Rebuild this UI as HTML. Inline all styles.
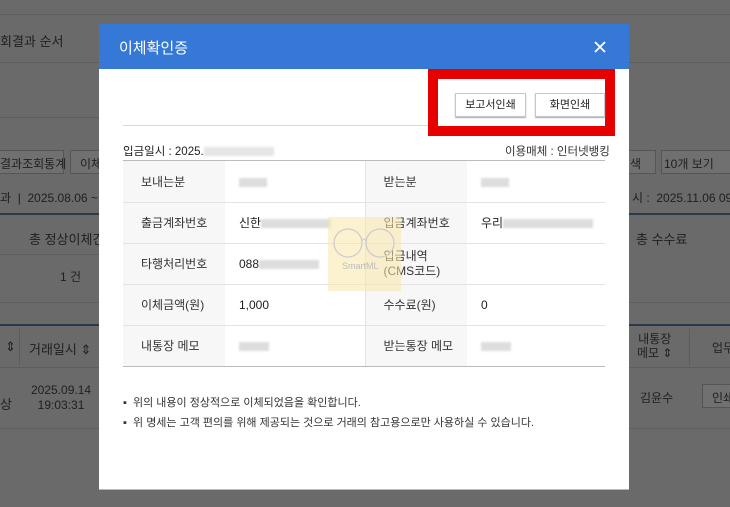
<!DOCTYPE html>
<html><head><meta charset="utf-8"><style>
*{margin:0;padding:0;box-sizing:border-box}
body{width:730px;height:507px;overflow:hidden;background:#6a6a6a;position:relative;font-family:"Liberation Sans","Noto Sans CJK KR",sans-serif;color:#1e1e1e}
.a{position:absolute}
.bg{font-size:12px;color:#1f1f1f;white-space:nowrap}
.hl{height:1px;background:#5e5e5e}
.dl{height:2px;background:#2a3a4a}
.btnb{border:1px solid #555;background:#707070}
#m{left:99px;top:24px;width:530px;height:466px;background:#fff;border-bottom:1px solid #bbb}
#hd{left:0;top:0;width:530px;height:45px;background:#3578d6;color:#fff;font-size:15px;padding:13px 0 0 20px}
table{border-collapse:collapse;font-size:12px}
td{height:41px;border-bottom:1px solid #e3e3e3;vertical-align:middle}
td.l{background:#f7f7f7;width:102px;padding-left:18px;color:#333}
td.v{width:140px;padding-left:14px;border-right:1px solid #e3e3e3}
td.v2{padding-left:14px}
.bl{display:inline-block;background:#ddd;height:9px;vertical-align:middle;filter:blur(1px)}
.pb{border:1px solid #c8c8c8;background:#fff;font-size:11px;text-align:center;line-height:22px;box-shadow:0 1px 1px #aaa}
</style></head><body>
<!-- background page -->
<div class="a hl" style="left:0;top:14px;width:730px"></div>
<div class="a bg" style="left:0;top:31px;font-size:13px">회결과 순서</div>
<div class="a hl" style="left:0;top:62px;width:99px"></div>
<div class="a hl" style="left:629px;top:62px;width:101px"></div>
<div class="a hl" style="left:0;top:117px;width:99px"></div>
<div class="a btnb" style="left:-2px;top:150px;width:66px;height:24px"></div>
<div class="a bg" style="left:0;top:155px">결과조회통계</div>
<div class="a btnb" style="left:70px;top:150px;width:40px;height:24px"></div>
<div class="a bg" style="left:80px;top:155px">이체</div>
<div class="a bg" style="left:0;top:189px">과 &nbsp;| &nbsp;2025.08.06 ~ 2</div>
<div class="a dl" style="left:0;top:213px;width:99px"></div>
<div class="a bg" style="left:29px;top:229px;font-size:13px">총 정상이체건</div>
<div class="a hl" style="left:0;top:254px;width:99px"></div>
<div class="a bg" style="left:60px;top:268px">1 건</div>
<div class="a hl" style="left:0;top:302px;width:99px"></div>
<div class="a dl" style="left:0;top:324px;width:99px"></div>
<div class="a bg" style="left:5px;top:339px;font-size:13px">⇕</div>
<div class="a" style="left:19px;top:329px;width:1px;height:36px;background:#5c5c5c"></div>
<div class="a bg" style="left:29px;top:339px;font-size:13px">거래일시 ⇕</div>
<div class="a hl" style="left:0;top:367px;width:99px"></div>
<div class="a bg" style="left:0;top:394px;font-size:13px">상</div>
<div class="a bg" style="left:31px;top:383px;font-size:12px;text-align:center;line-height:15px">2025.09.14<br>19:03:31</div>
<div class="a hl" style="left:0;top:428px;width:99px"></div>
<div class="a btnb" style="left:626px;top:150px;width:30px;height:24px"></div>
<div class="a bg" style="left:630px;top:155px">색</div>
<div class="a btnb" style="left:661px;top:150px;width:75px;height:24px"></div>
<div class="a bg" style="left:664px;top:155px">10개 보기</div>
<div class="a bg" style="left:632px;top:189px">시 : &nbsp;2025.11.06 09:</div>
<div class="a dl" style="left:629px;top:213px;width:101px"></div>
<div class="a bg" style="left:636px;top:229px;font-size:13px">총 수수료</div>
<div class="a hl" style="left:629px;top:302px;width:101px"></div>
<div class="a dl" style="left:629px;top:324px;width:101px"></div>
<div class="a bg" style="left:637px;top:332px;line-height:14px;text-align:center">내통장<br>메모 ⇕</div>
<div class="a" style="left:689px;top:329px;width:1px;height:36px;background:#5c5c5c"></div>
<div class="a bg" style="left:712px;top:339px">업무</div>
<div class="a hl" style="left:629px;top:367px;width:101px"></div>
<div class="a bg" style="left:640px;top:389px">김윤수</div>
<div class="a btnb" style="left:702px;top:384px;width:40px;height:24px"></div>
<div class="a bg" style="left:712px;top:389px">인쇄</div>
<div class="a hl" style="left:629px;top:428px;width:101px"></div>

<!-- modal -->
<div id="m" class="a">
 <div id="hd" class="a">이체확인증
  <svg class="a" style="left:495px;top:17px" width="12" height="12" viewBox="0 0 12 12"><path d="M1 1L11 11M11 1L1 11" stroke="#fff" stroke-width="1.8"/></svg>
 </div>
 <div class="a" style="left:24px;top:101px;width:482px;height:1px;background:#d8d8d8"></div>
 <div class="a" style="left:24px;top:119px;font-size:11.5px">입금일시 : 2025.<span class="bl" style="width:70px;background:#e6e6e6"></span></div>
 <div class="a" style="left:406px;top:119px;font-size:11.5px;color:#333">이용매체 : 인터넷뱅킹</div>
 <div class="a" style="left:24px;top:136px;width:482px;height:1px;background:#bbb"></div>
 <table class="a" style="left:24px;top:137px;width:482px">
  <tr><td class="l">보내는분</td><td class="v"><span class="bl" style="width:28px"></span></td><td class="l">받는분</td><td class="v2"><span class="bl" style="width:28px"></span></td></tr>
  <tr><td class="l">출금계좌번호</td><td class="v">신한<span class="bl" style="width:70px"></span></td><td class="l">입금계좌번호</td><td class="v2">우리<span class="bl" style="width:90px"></span></td></tr>
  <tr><td class="l">타행처리번호</td><td class="v">088<span class="bl" style="width:60px"></span></td><td class="l" style="line-height:15px">입금내역<br>(CMS코드)</td><td class="v2"></td></tr>
  <tr><td class="l">이체금액(원)</td><td class="v">1,000</td><td class="l">수수료(원)</td><td class="v2">0</td></tr>
  <tr><td class="l" style="border-bottom:1px solid #bbb">내통장 메모</td><td class="v" style="border-bottom:1px solid #bbb"><span class="bl" style="width:30px"></span></td><td class="l" style="border-bottom:1px solid #bbb">받는통장 메모</td><td class="v2" style="border-bottom:1px solid #bbb"><span class="bl" style="width:30px"></span></td></tr>
 </table>
 <div class="a" style="left:229px;top:193px;width:73px;height:74px;background:rgba(250,232,170,0.55)">
  <svg width="73" height="74"><circle cx="20" cy="26" r="14" fill="none" stroke="#ccc" stroke-width="1.3"/><circle cx="52" cy="26" r="14" fill="none" stroke="#ccc" stroke-width="1.3"/><path d="M34 24Q36 20 38 24" fill="none" stroke="#ccc"/><text x="14" y="52" font-size="9" fill="#bbb" font-family="Liberation Sans">SmartML</text></svg>
 </div>
 <div class="a" style="left:24px;top:369px;font-size:11px;color:#333;line-height:20px">
  <div>▪&nbsp; 위의 내용이 정상적으로 이체되었음을 확인합니다.</div>
  <div>▪&nbsp; 위 명세는 고객 편의를 위해 제공되는 것으로 거래의 참고용으로만 사용하실 수 있습니다.</div>
 </div>
</div>
<!-- red box -->
<div class="a" style="left:428px;top:69px;width:187px;height:67px;border:10px solid #e60000;background:#fff"></div>
<div class="a pb" style="left:455px;top:93px;width:71px;height:24px">보고서인쇄</div>
<div class="a pb" style="left:535px;top:93px;width:70px;height:24px">화면인쇄</div>
</body></html>
